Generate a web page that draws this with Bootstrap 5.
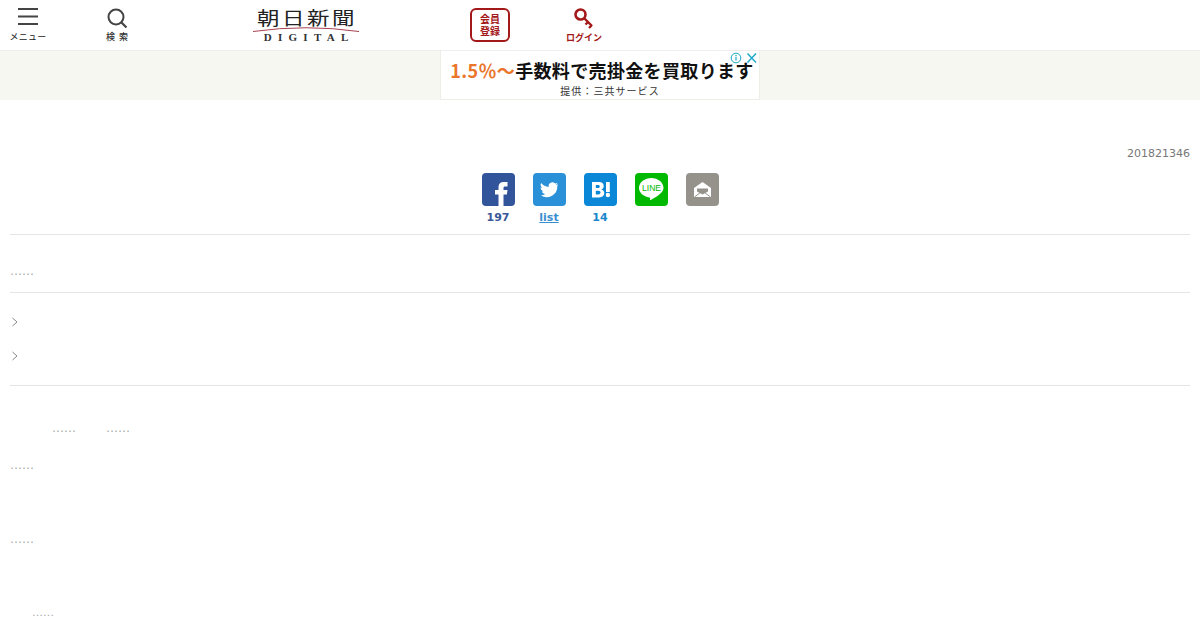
<!DOCTYPE html>
<html lang="ja">
<head>
    <meta charset="UTF-8">
    <meta name="viewport" content="width=device-width, initial-scale=1.0">
    <title>朝日新聞デジタル</title>
    <link href="https://cdn.jsdelivr.net/npm/bootstrap@5.3.3/dist/css/bootstrap.min.css" rel="stylesheet">
    <style>
        body {
            font-family: "DejaVu Sans", "Noto Sans CJK JP", sans-serif;
            color: #333;
            background: #fff;
            height: 630px;
            overflow: hidden;
        }
        .site-head { height: 50px; }
        .head-cell { display: flex; flex-direction: column; align-items: center; height: 50px; color: #333; text-decoration: none; }
        .cell-menu { width: 56px; }
        .cell-search { width: 122px; }
        .cell-logo { width: 256px; }
        .cell-reg { width: 112px; }
        .cell-login { width: 76px; }
        .head-label { font: 700 9px/12px "Noto Sans CJK JP", sans-serif; white-space: nowrap; }
        .cell-menu .head-label { margin-top: 5px; font-weight: 400; color: #222; letter-spacing: .3px; }
        .cell-search .head-label { margin-top: 3px; font-weight: 500; word-spacing: 2px; }
        .head-icon { display: block; margin-top: 8px; }
        .logo-kanji { display: block; font: 400 18px/18px "Noto Sans CJK JP", sans-serif; letter-spacing: 2px; color: #222; margin-top: 8px; margin-right: -2px; transform: scaleX(1.25); }
        .logo-sub { font: 700 11px/12px "Liberation Serif", serif; letter-spacing: 6.300px; color: #333; margin-top: -1px; margin-right: -6.300px; }
        .logo-arc { display: block; margin-top: 1px; }
        .reg-box {
            width: 40px; height: 34px; margin-top: 8px;
            border: 2px solid #a31818; border-radius: 6px;
            color: #a31818; font: 700 10px/12px "Noto Sans CJK JP", sans-serif;
            text-align: center; padding-top: 3px;
        }
        .cell-login .head-label { color: #a31818; margin-top: 2px; }
        .ad-band { height: 50px; background: #f7f7f2; border-top: 1px solid #eee; }
        .ad-box { width: 320px; height: 49px; background: #fff; border: 1px solid #eeeee8; border-top: 0; text-align: center; }
        .ad-title { font: 700 18px/24px "Noto Sans CJK JP", serif; color: #111; white-space: nowrap; margin-top: 7px; letter-spacing: .35px; padding-left: 4px; }
        .ad-title span { color: #e9762b; }
        .ad-by { font: 400 10px/12px "Noto Sans CJK JP", serif; color: #333; letter-spacing: 1.050px; margin-top: 3px; padding-left: 20px; }
        .ad-badges { position: absolute; top: 1px; right: 2px; line-height: 0; }
        .page-main { padding: 0 10px; }
        .stamp-line { font-size: 11px; line-height: 14px; color: #777; padding-top: 47px; }
        .share-row { gap: 18px; margin-top: 12px; height: 61px; }
        .share-item { width: 33px; text-align: center; font-size: 11px; line-height: 14px; font-weight: 700; }
        .share-tile { display: block; width: 33px; height: 33px; border-radius: 4px; margin-bottom: 5px; overflow: hidden; }
        .share-item a { color: #3a8fd0; }
        .fb-count { color: #3b5998; margin: 0 -6px; }
        .hb-count { color: #1a86cc; }
        .rule-line { border-top: 1px solid #e5e5e5; }
        .dots { font-size: 12px; line-height: 16px; color: #aaa; white-space: nowrap; opacity: .99; }
        .block-lead { height: 58px; padding-top: 28px; }
        .link-rows { height: 93px; padding-top: 12px; }
        .gap-row { height: 34px; }
        .gap-row svg { display: block; margin-left: 1px; }
        .tail-list { padding-top: 34px; }
        .dots-pair { gap: 30px; padding-left: 42px; }
        .tail-second { margin-top: 21px; }
        .tail-third { margin-top: 58px; }
        .tail-last { margin-top: 58px; padding-left: 22px; font-size: 11px; }
    </style>
</head>
<body>

    <header class="site-head d-flex">
        <a class="head-cell cell-menu" href="#">
            <svg class="head-icon" width="20" height="18" viewBox="0 0 20 18"><path d="M0 1h20M0 8.500h20M0 16h20" stroke="#444" stroke-width="2"/></svg>
            <span class="head-label">メニュー</span>
        </a>
        <a class="head-cell cell-search" href="#">
            <svg class="head-icon" width="20" height="20" viewBox="0 0 20 20"><circle cx="9" cy="9" r="7.500" fill="none" stroke="#444" stroke-width="2"/><path d="M14.500 14.500L19.500 19.500" stroke="#444" stroke-width="2.200"/></svg>
            <span class="head-label">検 索</span>
        </a>
        <a class="head-cell cell-logo" href="#">
            <span class="logo-kanji">朝日新聞</span>
            <svg class="logo-arc" width="106" height="5" viewBox="0 0 106 5"><path d="M0 4.500Q53 -3 106 4.500" fill="none" stroke="#a8424f" stroke-width="1"/></svg>
            <span class="logo-sub">DIGITAL</span>
        </a>
        <div class="head-cell cell-reg">
            <a class="reg-box text-decoration-none" href="#">会員<br>登録</a>
        </div>
        <a class="head-cell cell-login" href="#">
            <svg class="head-icon" width="20" height="22" viewBox="0 0 20 22"><circle cx="6.500" cy="6.500" r="5" fill="none" stroke="#a31818" stroke-width="2.600"/><path d="M10 10L18 18M14 14l-2.500 2.500M17.500 17.500l-2.500 2.500" stroke="#a31818" stroke-width="2.400" fill="none"/></svg>
            <span class="head-label">ログイン</span>
        </a>
    </header>

    <div class="ad-band d-flex justify-content-center">
        <div class="ad-box position-relative">
            <div class="ad-title"><span>1.5％～</span>手数料で売掛金を買取ります</div>
            <div class="ad-by">提供：三共サービス</div>
            <div class="ad-badges">
                <svg width="27" height="12" viewBox="0 0 27 12"><circle cx="6" cy="6" r="4.800" fill="none" stroke="#1aa6c8" stroke-width="1"/><path d="M6 5v3.500M6 3v1.200" stroke="#1aa6c8" stroke-width="1.200"/><path d="M17.500 1.500l8.500 9M26 1.500l-8.500 9" stroke="#1aa6c8" stroke-width="1.400"/></svg>
            </div>
        </div>
    </div>

    <main class="page-main">
        <div class="stamp-line text-end">201821346</div>

        <div class="share-row d-flex justify-content-center">
            <div class="share-item">
                <svg class="share-tile" viewBox="0 0 33 33"><rect width="33" height="33" fill="#32549b"/><path d="M16.500 33V21.500H13V17h3.500v-3c0-3.300 2-5 5-5h4v4.500h-2.500c-1.200 0-1.500.6-1.500 1.700V17h4l-.6 4.500h-3.400V33z" fill="#fff"/></svg>
                <div class="fb-count">197</div>
            </div>
            <div class="share-item">
                <svg class="share-tile" viewBox="0 0 33 33"><rect width="33" height="33" fill="#2a90d8"/><path transform="translate(16.500 16) scale(.85) translate(-17 -16)" d="M27 10.300c-.8.4-1.600.6-2.500.7.900-.5 1.600-1.400 1.900-2.400-.8.500-1.800.8-2.800 1a4.400 4.400 0 0 0-7.500 4c-3.600-.2-6.900-1.900-9-4.600-1.100 2-.5 4.500 1.400 5.800-.7 0-1.400-.2-2-.5 0 2.100 1.500 4 3.500 4.400-.6.200-1.300.2-2 .1.600 1.800 2.200 3 4.100 3A9 9 0 0 1 7 23.600 12.500 12.500 0 0 0 26.200 12.500c.3-.6.600-1.400.8-2.200z" fill="#fff"/></svg>
                <a href="#">list</a>
            </div>
            <div class="share-item">
                <svg class="share-tile" viewBox="0 0 33 33"><rect width="33" height="33" fill="#0a87d6"/><path transform="translate(0 1)" fill="#fff" fill-rule="evenodd" d="M8 8h7c3 0 4.700 1.500 4.700 4 0 1.700-.9 2.900-2.400 3.400 1.900.4 3 1.800 3 3.700 0 2.800-2 4.400-5.300 4.400H8zm3.800 3v3h2.300c1.100 0 1.700-.6 1.700-1.500s-.6-1.500-1.700-1.500zm0 5.800v3.600h2.700c1.300 0 2-.7 2-1.800s-.7-1.800-2-1.800zM22 8h3.800v10H22zM21.700 21a2.200 2.200 0 1 1 4.400 0 2.200 2.200 0 0 1-4.400 0z"/></svg>
                <div class="hb-count">14</div>
            </div>
            <div class="share-item">
                <svg class="share-tile" viewBox="0 0 33 33"><rect width="33" height="33" fill="#00b900"/><path d="M16.500 5C9.800 5 4 9.300 4 15c0 4.700 4.400 8.600 10.400 9.400.9.200.7.700.6 1.800-.1.700.3 1 1 .7 2.500-1.200 7.500-4.200 9.900-6.800 1.500-1.600 2.600-3.300 2.600-5.100 0-5.700-5.800-10-12-10z" fill="#fff"/><text x="16.500" y="18" text-anchor="middle" font-family="Liberation Sans, sans-serif" font-size="8.500" font-weight="400" fill="#00b900">LINE</text></svg>
                <div>&nbsp;</div>
            </div>
            <div class="share-item">
                <svg class="share-tile" viewBox="0 0 33 33"><rect width="33" height="33" fill="#94928b"/><path d="M16.500 9L25 15v9H8V15z" fill="#fff"/><path d="M11 15.500h11v3l-5.500 3-5.500-3z" fill="#94928b"/><path d="M8.500 24l8-6 8 6" fill="none" stroke="#94928b" stroke-width="1"/></svg>
            </div>
        </div>

        <div class="rule-line block-lead">
            <div class="dots">……</div>
        </div>
        <div class="rule-line link-rows">
            <div class="gap-row d-flex align-items-center">
                <svg width="8" height="10" viewBox="0 0 8 10"><path d="M1.500 1l4.500 4-4.500 4" fill="none" stroke="#888" stroke-width="1"/></svg>
            </div>
            <div class="gap-row d-flex align-items-center">
                <svg width="8" height="10" viewBox="0 0 8 10"><path d="M1.500 1l4.500 4-4.500 4" fill="none" stroke="#888" stroke-width="1"/></svg>
            </div>
        </div>
        <div class="rule-line tail-list">
            <div class="dots-pair dots d-flex">
                <span>……</span><span>……</span>
            </div>
            <div class="dots tail-second">……</div>
            <div class="dots tail-third">……</div>
            <div class="dots tail-last">……</div>
        </div>
    </main>

</body>
</html>
